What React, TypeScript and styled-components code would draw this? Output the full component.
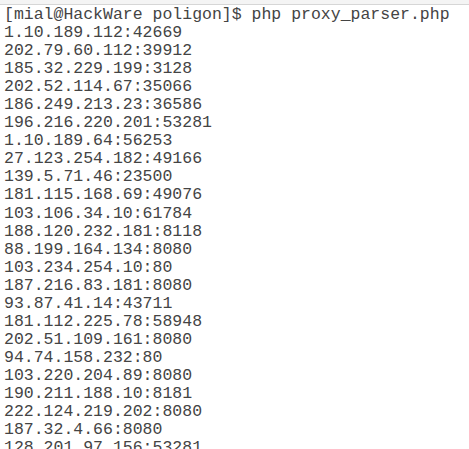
import React from "react";
import styled, { createGlobalStyle } from "styled-components";

const Global = createGlobalStyle`
  html, body { margin: 0; padding: 0; background: #ffffff; }
  body { overflow: hidden; }
`;

const Page = styled.div`
  width: 469px;
  height: 449px;
  overflow: hidden;
  background: #ffffff;
  display: flex;
  flex-direction: column;
`;

const TopStrip = styled.div`
  height: 4px;
  background: #f4f4f4;
  border-bottom: 1px solid #d6d6d6;
  flex: none;
`;

const Output = styled.pre`
  margin: 0;
  padding: 1px 0 0 4px;
  font-family: "Liberation Mono", "Courier New", monospace;
  font-size: 16.5px;
  line-height: 18.05px;
  color: #444444;
  white-space: pre;
`;

const lines = [
  "[mial@HackWare poligon]$ php proxy_parser.php",
  "1.10.189.112:42669",
  "202.79.60.112:39912",
  "185.32.229.199:3128",
  "202.52.114.67:35066",
  "186.249.213.23:36586",
  "196.216.220.201:53281",
  "1.10.189.64:56253",
  "27.123.254.182:49166",
  "139.5.71.46:23500",
  "181.115.168.69:49076",
  "103.106.34.10:61784",
  "188.120.232.181:8118",
  "88.199.164.134:8080",
  "103.234.254.10:80",
  "187.216.83.181:8080",
  "93.87.41.14:43711",
  "181.112.225.78:58948",
  "202.51.109.161:8080",
  "94.74.158.232:80",
  "103.220.204.89:8080",
  "190.211.188.10:8181",
  "222.124.219.202:8080",
  "187.32.4.66:8080",
  "128.201.97.156:53281",
];

export default function App() {
  return (
    <Page>
      <Global />
      <TopStrip />
      <Output>{lines.join("\n")}</Output>
    </Page>
  );
}
